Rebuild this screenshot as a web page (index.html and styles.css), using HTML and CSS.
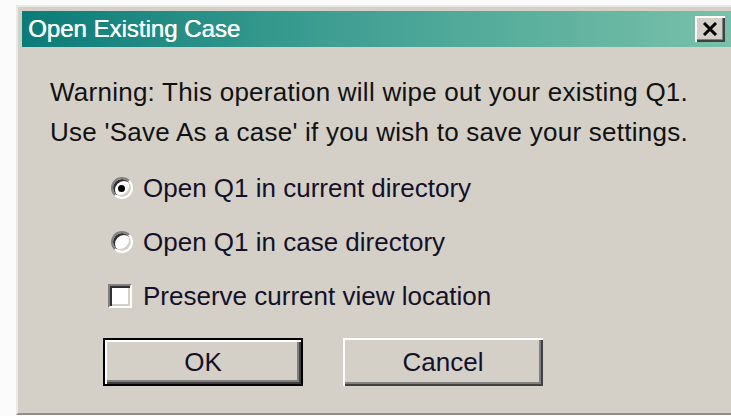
FILE: index.html
```html
<!DOCTYPE html>
<html lang="en">
<head>
<meta charset="utf-8">
<title>Open Existing Case</title>
<link rel="stylesheet" href="styles.css">
</head>
<body>
<div class="dialog">
  <div class="titlebar">
    <span class="title">Open Existing Case</span>
    <button class="close" type="button" aria-label="Close">
      <svg width="16" height="14" viewBox="0 0 16 14"><path d="M2 1 L14 13 M14 1 L2 13" stroke="#000" stroke-width="3" fill="none"/></svg>
    </button>
  </div>
  <div class="content">
    <p class="message">Warning: This operation will wipe out your existing Q1.<br>Use 'Save As a case' if you wish to save your settings.</p>
    <div class="options">
      <label class="option"><span class="mark"><span class="radio checked"></span></span><span class="label">Open Q1 in current directory</span></label>
      <label class="option"><span class="mark"><span class="radio"></span></span><span class="label">Open Q1 in case directory</span></label>
      <label class="option"><span class="mark"><span class="checkbox"></span></span><span class="label">Preserve current view location</span></label>
    </div>
    <div class="buttons">
      <button class="btn default" type="button">OK</button>
      <button class="btn" type="button">Cancel</button>
    </div>
  </div>
</div>
</body>
</html>
```

FILE: styles.css
```css
html, body {
  margin: 0;
  padding: 0;
  background: #fbfbfb;
  overflow: hidden;
  height: 416px;
}

.dialog {
  margin: 5px 0 0 16px;
  width: 711px;
  height: 402px;
  padding: 4px 0 0 4px;
  background: #d4d0c8;
  border-top: 2px solid #ebe9e5;
  border-left: 2px solid #ebe9e5;
  border-bottom: 2px solid #8f8d8a;
  font-family: "Liberation Sans", Arial, sans-serif;
  color: #000;
}

.titlebar {
  height: 36px;
  display: flex;
  align-items: center;
  justify-content: space-between;
  padding: 0 0 0 6px;
  background: linear-gradient(to right, #0a7c78 0%, #3a9c90 40%, #79c1aa 100%);
}

.title {
  color: #fff;
  font-size: 24px;
  text-shadow: 0.4px 0 0 #fff;
}

.close {
  width: 30px;
  height: 26px;
  margin-right: 8px;
  padding: 0;
  display: flex;
  align-items: center;
  justify-content: center;
  background: #d4d0c8;
  border: none;
  box-shadow: inset 2px 2px 0 #fff, inset -2px -2px 0 #404040, inset -3px -3px 0 #808080;
}

.content {
  padding: 25px 0 0 28px;
}

.message {
  margin: 0;
  font-size: 26px;
  line-height: 40px;
  letter-spacing: 0.25px;
  color: #111;
}

.options {
  margin: 9px 0 0 57px;
  display: flex;
  flex-direction: column;
}

.option {
  height: 54px;
  display: flex;
  align-items: center;
  gap: 10px;
  font-size: 26px;
  color: #14102a;
}

.mark {
  width: 26px;
  display: flex;
  justify-content: center;
}

.radio {
  box-sizing: border-box;
  width: 22px;
  height: 22px;
  border-radius: 50%;
  background: #fff;
  border: 2px solid;
  border-color: #808080 #fff #fff #808080;
  box-shadow: inset 2px 2px 0 #303030, inset -2px -2px 0 #d4d0c8;
  display: flex;
  align-items: center;
  justify-content: center;
  margin-left: 3px;
}

.radio.checked::after {
  content: "";
  width: 7px;
  height: 7px;
  border-radius: 50%;
  background: #000;
}

.checkbox {
  box-sizing: border-box;
  width: 24px;
  height: 24px;
  background: #fff;
  border: 2px solid;
  border-color: #808080 #fff #fff #808080;
  box-shadow: inset 2px 2px 0 #303030, inset -2px -2px 0 #d4d0c8;
}

.buttons {
  margin: 15px 0 0 53px;
  display: flex;
  gap: 40px;
}

.btn {
  box-sizing: border-box;
  width: 200px;
  height: 48px;
  padding: 0;
  font-family: "Liberation Sans", Arial, sans-serif;
  font-size: 26px;
  color: #14102a;
  background: #d4d0c8;
  border: none;
  box-shadow: inset 2px 2px 0 #fff, inset -2px -2px 0 #404040, inset -4px -4px 0 #808080;
}

.btn.default {
  border: 2px solid #000;
  box-shadow: inset 2px 2px 0 #fff, inset -2px -2px 0 #404040, inset -4px -4px 0 #808080;
}
```
